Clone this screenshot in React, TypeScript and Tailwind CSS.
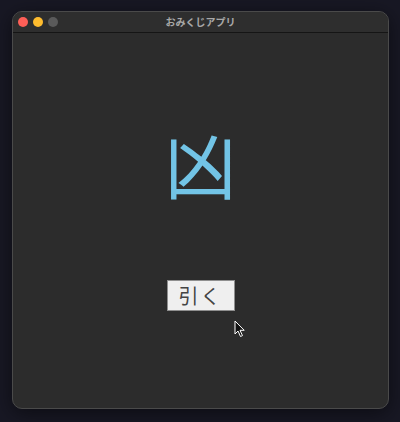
const Cursor = () => (
	<svg width="12" height="18" viewBox="0 0 12 18" className="absolute left-[234px] top-[320px]">
		<path d="M1 1 L1 14 L4 11 L6.5 16.5 L8.5 15.6 L6 10.3 L10.2 10.3 Z" fill="#111" stroke="#fff" strokeWidth="1" strokeLinejoin="round" />
	</svg>
);

const App = () => {
	return (
		<div className="relative w-[400px] h-[422px] bg-[#181824] pt-[11px] pl-[12px] font-['Noto_Sans_CJK_JP','Noto_Sans',sans-serif]">
			<div className="w-[377px] h-[398px] rounded-[10px] bg-[#2c2c2c] border border-[#4a4a4a] overflow-hidden flex flex-col shadow-[0_4px_20px_rgba(0,0,0,0.5)]">
				<header className="relative h-[21px] flex items-center justify-center border-b border-[#151515] bg-[#2e2e2e]">
					<div className="absolute left-[5px] top-[5px] flex gap-[5px]">
						<div className="w-[10px] h-[10px] rounded-full bg-[#fe5f57]" />
						<div className="w-[10px] h-[10px] rounded-full bg-[#febc2e]" />
						<div className="w-[10px] h-[10px] rounded-full bg-[#5a5a5a]" />
					</div>
					<span className="text-[10px] font-bold text-[#a8a8a8] leading-none">おみくじアプリ</span>
				</header>
				<main className="flex-1 flex flex-col items-center">
					<div className="mt-[90px] text-[72px] font-normal leading-none text-[#72c4e6] h-[80px] flex items-center">凶</div>
					<button className="mt-[77px] w-[68px] h-[31px] bg-[#efefef] border border-[#8f8f8f] text-[20px] leading-none text-[#444] flex items-center justify-center tracking-[2px]">
						引く
					</button>
				</main>
			</div>
			<Cursor />
		</div>
	);
};

export default App;
